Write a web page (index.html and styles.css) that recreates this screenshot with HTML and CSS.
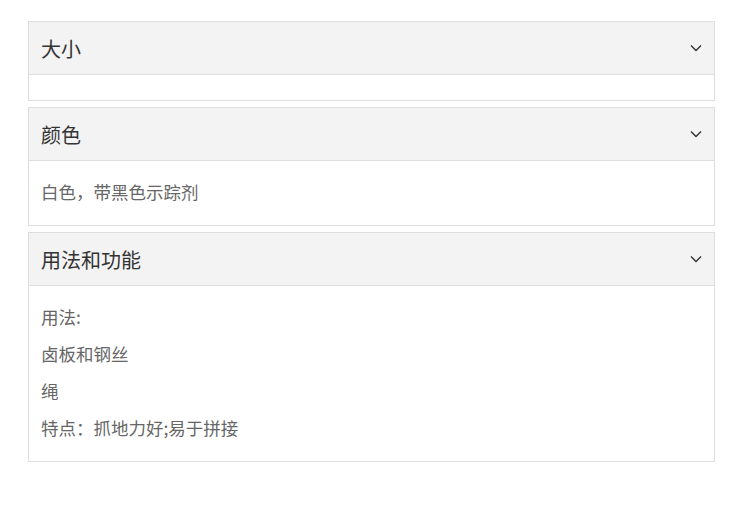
FILE: index.html
```html
<!DOCTYPE html>
<html lang="zh-CN">
<head>
    <meta charset="UTF-8">
    <meta name="viewport" content="width=device-width, initial-scale=1.0">
    <title>产品详情</title>
    <link rel="stylesheet" href="styles.css">
</head>
<body>
    <div class="accordion">
        <section class="panel">
            <div class="panel-head">
                <h3>大小</h3>
                <svg class="chevron" width="12" height="8" viewBox="0 0 12 8"><path d="M1 1.5l5 5 5-5" fill="none" stroke="#333" stroke-width="1.4"/></svg>
            </div>
            <div class="panel-body empty"></div>
        </section>

        <section class="panel">
            <div class="panel-head">
                <h3>颜色</h3>
                <svg class="chevron" width="12" height="8" viewBox="0 0 12 8"><path d="M1 1.5l5 5 5-5" fill="none" stroke="#333" stroke-width="1.4"/></svg>
            </div>
            <div class="panel-body">
                <p>白色，带黑色示踪剂</p>
            </div>
        </section>

        <section class="panel">
            <div class="panel-head">
                <h3>用法和功能</h3>
                <svg class="chevron" width="12" height="8" viewBox="0 0 12 8"><path d="M1 1.5l5 5 5-5" fill="none" stroke="#333" stroke-width="1.4"/></svg>
            </div>
            <div class="panel-body">
                <p>用法:</p>
                <p>卤板和钢丝</p>
                <p>绳</p>
                <p>特点：抓地力好;易于拼接</p>
            </div>
        </section>
    </div>
</body>
</html>
```

FILE: styles.css
```css
/* Estilos gerais */
body {
    font-family: "Noto Sans CJK SC", "Noto Sans", sans-serif;
    background-color: #ffffff;
    color: #333;
    margin: 0;
    padding: 21px 34px 0 28px;
}

/* Acordeão */
.accordion {
    display: flex;
    flex-direction: column;
    gap: 6px;
}

.panel {
    border: 1px solid #dddddd;
    background-color: #fff;
}

.panel-head {
    display: flex;
    align-items: center;
    justify-content: space-between;
    height: 52px;
    padding: 0 12px;
    background-color: #f3f3f3;
    border-bottom: 1px solid #dddddd;
}

.panel-head h3 {
    margin: 0;
    font-size: 20px;
    font-weight: normal;
    color: #333;
}

.panel-body {
    padding: 12px 12px 15px;
}

.panel-body.empty {
    padding: 12px 12px 13px;
}

.panel-body p {
    margin: 0;
    font-size: 17.5px;
    line-height: 37px;
    color: #666;
}
```
